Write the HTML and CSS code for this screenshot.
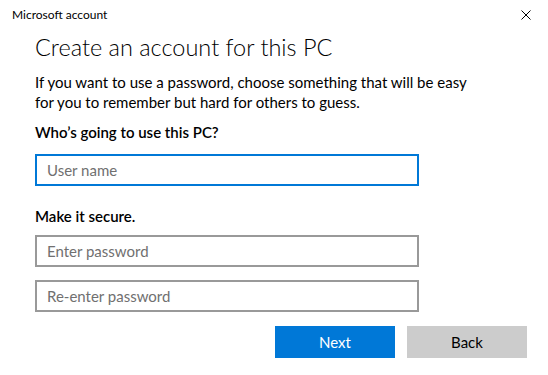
FILE: index.html
```html
<!DOCTYPE html>
<html lang="en">
<head>
  <meta charset="UTF-8" />
  <meta name="viewport" content="width=device-width, initial-scale=1" />
  <title>Microsoft account</title>
  <link rel="stylesheet" href="styles.css">
</head>
<body>
  <div class="titlebar">
    <span class="title">Microsoft account</span>
    <button class="close" title="Close">
      <svg width="10" height="10" viewBox="0 0 10 10">
        <path d="M0.5 0.5 L9.5 9.5 M9.5 0.5 L0.5 9.5" stroke="#000" stroke-width="1" fill="none" />
      </svg>
    </button>
  </div>

  <div class="content">
    <h1>Create an account for this PC</h1>
    <p class="intro">
      If you want to use a password, choose something that will be easy<br />
      for you to remember but hard for others to guess.
    </p>

    <div class="label first">Who’s going to use this PC?</div>
    <input class="field focused" type="text" placeholder="User name" />

    <div class="label second">Make it secure.</div>
    <input class="field pw" type="password" placeholder="Enter password" />
    <input class="field pw2" type="password" placeholder="Re-enter password" />

    <div class="actions">
      <button class="btn primary">Next</button>
      <button class="btn">Back</button>
    </div>
  </div>
</body>
</html>
```
FILE: styles.css
```css
/* Genel */
body {
  margin: 0;
  background: #fff;
  color: #000;
  font-family: Lato, "Open Sans", sans-serif;
  font-size: 15px;
}

/* Pencere başlığı */
.titlebar {
  height: 30px;
  display: flex;
  align-items: center;
  justify-content: space-between;
  padding: 0 17px 0 12px;
}
.title {
  font-size: 12px;
  line-height: 30px;
}
.close {
  background: transparent;
  border: none;
  padding: 0;
  width: 10px;
  height: 10px;
  display: flex;
  cursor: pointer;
}

/* İçerik */
.content {
  padding: 0 21px 0 35px;
}
h1 {
  margin: 2px 0 0;
  font-size: 23.5px;
  font-weight: 300;
  line-height: 30px;
}
.intro {
  margin: 10px 0 0;
  line-height: 20px;
}
.label {
  font-weight: 600;
  line-height: 20px;
}
.label.first { margin-top: 10px; }
.label.second { margin-top: 20px; }

.field {
  display: block;
  box-sizing: border-box;
  width: 384px;
  height: 32px;
  margin: 0;
  padding: 0 10px;
  border: 2px solid #999;
  border-radius: 0;
  outline: none;
  font-family: Lato, "Open Sans", sans-serif;
  font-size: 15px;
  color: #000;
}
.field::placeholder {
  color: #707070;
}
.field.focused {
  margin-top: 12px;
  border-color: #0078d7;
}
.field.pw { margin-top: 9px; }
.field.pw2 { margin-top: 13px; }

/* Butonlar */
.actions {
  display: flex;
  justify-content: flex-end;
  gap: 12px;
  margin-top: 14px;
}
.btn {
  width: 120px;
  height: 32px;
  border: none;
  border-radius: 0;
  background: #ccc;
  color: #000;
  font-family: Lato, "Open Sans", sans-serif;
  font-size: 15px;
  cursor: pointer;
}
.btn.primary {
  background: #0078d7;
  color: #fff;
}
```
